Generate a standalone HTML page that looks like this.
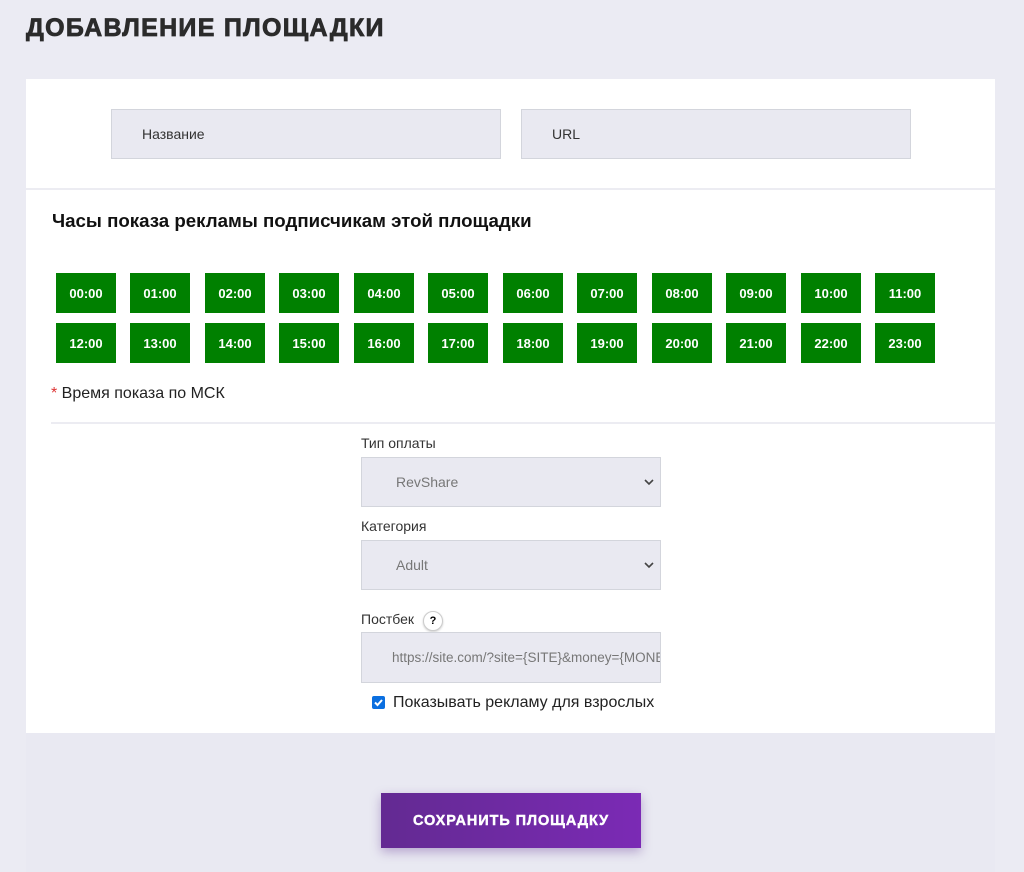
<!DOCTYPE html>
<html><head><meta charset="utf-8"><style>
*{box-sizing:border-box;margin:0;padding:0}
body{width:1024px;height:872px;background:#ebebf3;font-family:"Liberation Sans",Arial,sans-serif;position:relative;overflow:hidden}
.a{position:absolute}
h1{position:absolute;left:26px;top:14px;font-size:25px;font-weight:900;color:#2b2b2b;letter-spacing:1.3px;-webkit-text-stroke:0.8px #2b2b2b}
.lower{left:26px;top:733px;width:969px;height:139px;background:#e9e9f2}
.card{left:26px;top:79px;width:969px;height:654px;background:#fff}
.inp{background:#e9e9f1;border:1px solid #d3d5dc;font-size:14px;color:#333;padding-left:30px;display:flex;align-items:center}
.t{width:60px;height:40px;background:#008000;color:#fff;font-size:13px;font-weight:bold;display:flex;align-items:center;justify-content:center}
.lbl{font-size:14px;color:#333}
.sel{background:#e9e9f1;border:1px solid #d3d5dc;font-size:14px;color:#777;padding-left:34px;display:flex;align-items:center}
.chev{position:absolute;right:6px;top:20px}
.btn{left:381px;top:793px;width:260px;height:55px;background:linear-gradient(90deg,#632a92,#7b2ab5);color:#fff;font-weight:900;font-size:14.5px;display:flex;align-items:center;justify-content:center;letter-spacing:0.9px;-webkit-text-stroke:0.4px #fff;box-shadow:0 4px 10px rgba(90,40,140,.35)}
</style></head><body>
<h1>ДОБАВЛЕНИЕ ПЛОЩАДКИ</h1>
<div class="a lower"></div>
<div class="a card"></div>
<div class="a inp" style="left:111px;top:109px;width:390px;height:50px">Название</div>
<div class="a inp" style="left:521px;top:109px;width:390px;height:50px">URL</div>
<div class="a" style="left:26px;top:188px;width:969px;height:2px;background:#ececf2"></div>
<div class="a" style="left:52px;top:210px;font-size:18.7px;font-weight:bold;color:#111">Часы показа рекламы подписчикам этой площадки</div>
<div id="g"></div>
<div class="a" style="left:51px;top:385px;font-size:16px;color:#222"><span style="color:#d33">*</span> Время показа по МСК</div>
<div class="a" style="left:51px;top:422px;width:944px;height:2px;background:#ececf2"></div>
<div class="a lbl" style="left:361px;top:435px">Тип оплаты</div>
<div class="a sel" style="left:361px;top:457px;width:300px;height:50px">RevShare<svg class="chev" width="10" height="8" viewBox="0 0 10 8"><path d="M1 2l4 4 4-4" fill="none" stroke="#444" stroke-width="1.6"/></svg></div>
<div class="a lbl" style="left:361px;top:518px">Категория</div>
<div class="a sel" style="left:361px;top:540px;width:300px;height:50px">Adult<svg class="chev" width="10" height="8" viewBox="0 0 10 8"><path d="M1 2l4 4 4-4" fill="none" stroke="#444" stroke-width="1.6"/></svg></div>
<div class="a lbl" style="left:361px;top:611px">Постбек</div>
<div class="a" style="left:423px;top:611px;width:20px;height:20px;border-radius:50%;border:1px solid #ccc;box-shadow:0 1px 2px rgba(0,0,0,.2);font-size:11px;font-weight:bold;display:flex;align-items:center;justify-content:center;background:#fff">?</div>
<div class="a sel" style="left:361px;top:632px;width:300px;height:51px;padding-left:30px;white-space:nowrap;overflow:hidden;font-size:13.5px">https://site.com/?site={SITE}&amp;money={MONEY}</div>
<div class="a" style="left:372px;top:696px;width:13px;height:13px;background:#0b6fe0;border-radius:2px"><svg width="13" height="13" viewBox="0 0 13 13"><path d="M3 6.5l2.5 2.5 4.5-5" fill="none" stroke="#fff" stroke-width="2"/></svg></div>
<div class="a" style="left:393px;top:694px;font-size:16px;color:#222">Показывать рекламу для взрослых</div>
<div class="a btn">СОХРАНИТЬ ПЛОЩАДКУ</div>
<script>
var h='';for(var i=0;i<24;i++){var r=Math.floor(i/12),c=i%12;h+='<div class="a t" style="left:'+Math.round(56+c*74.45)+'px;top:'+(273+r*50)+'px">'+(i<10?'0':'')+i+':00</div>';}
document.getElementById('g').innerHTML=h;
</script>
</body></html>
